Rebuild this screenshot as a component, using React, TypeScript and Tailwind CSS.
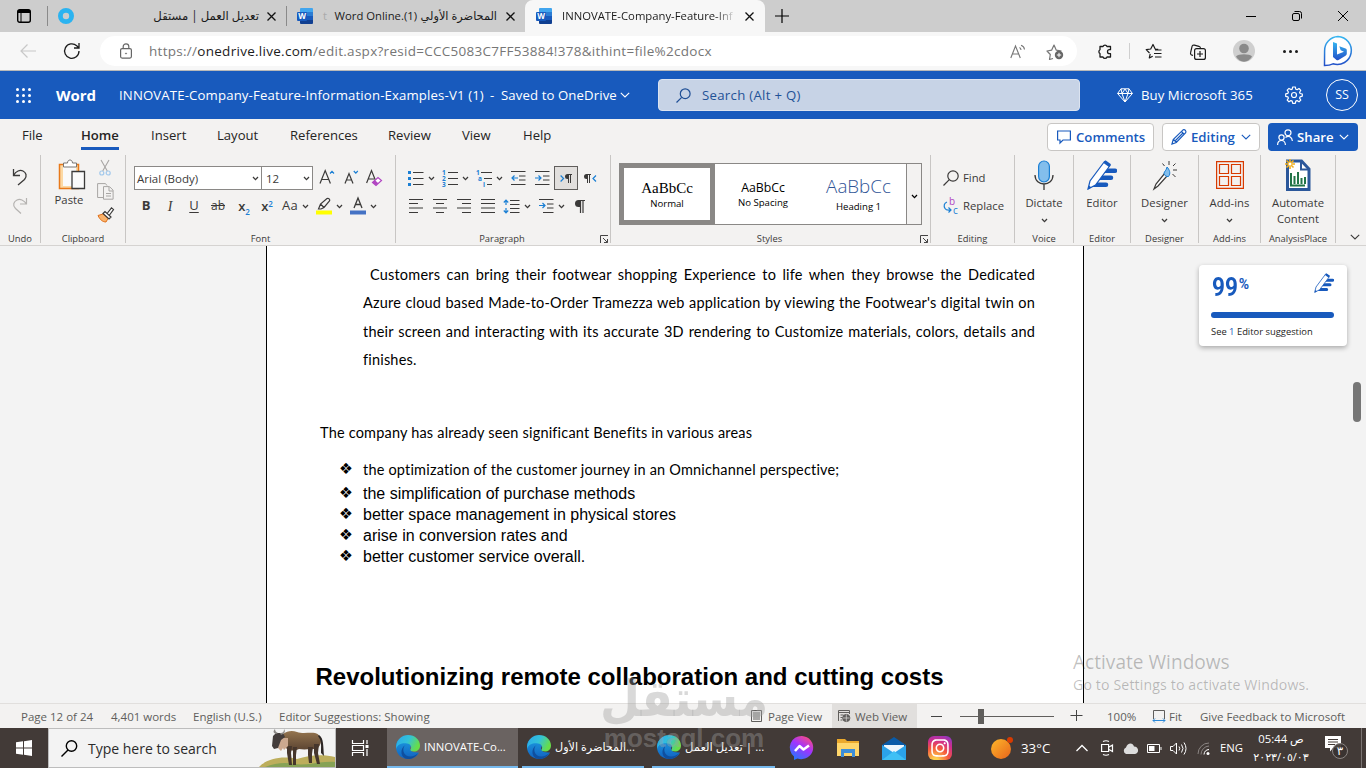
import type { ReactNode } from 'react';
import { FaInstagram } from 'react-icons/fa';

type SvgProps = {
  w: number;
  h: number;
  className?: string;
  children: ReactNode;
};

function Svg({ w, h, className = '', children }: SvgProps) {
  return (
    <svg
      width={w}
      height={h}
      viewBox={`0 0 ${w} ${h}`}
      fill="none"
      stroke="currentColor"
      className={`shrink-0 overflow-visible ${className}`}
    >
      {children}
    </svg>
  );
}

function Chevron({ className = '' }: { className?: string }) {
  return (
    <Svg w={7} h={5} className={className}>
      <path d="M1 1l2.5 2.6L6 1" strokeWidth="1.3" />
    </Svg>
  );
}

function WideChevron({ className = '' }: { className?: string }) {
  return (
    <Svg w={10} h={6} className={className}>
      <path d="M.8.8L5 5 9.200.8" strokeWidth="1.1" />
    </Svg>
  );
}

function WordIcon() {
  return (
    <Svg w={16} h={16}>
      <g stroke="none">
        <path d="M4 0h11a1 1 0 011 1v3H3V1a1 1 0 011-1z" fill="#41a5ee" />
        <path d="M3 4h13v4H3z" fill="#2b7cd3" />
        <path d="M3 8h13v4H3z" fill="#185abd" />
        <path d="M3 12h13v3a1 1 0 01-1 1H4a1 1 0 01-1-1z" fill="#103f91" />
        <rect y="4" width="10" height="9" rx="1" fill="#185abd" />
        <text x="5" y="11.300" textAnchor="middle" fontSize="8" fontWeight="700" fontFamily="Open Sans" fill="#fff">
          W
        </text>
      </g>
    </Svg>
  );
}

function CloseX() {
  return (
    <svg width="9" height="9" viewBox="0 0 9 9" stroke="#111" strokeWidth="1.3" className="shrink-0">
      <path d="M.5.5l8 8M8.500.5l-8 8" />
    </svg>
  );
}

function TabStrip() {
  return (
    <div className="flex h-8 items-center bg-[#cdcdcd] text-[11.300px] text-[#1b1b1b]">
      <div className="flex w-[47px] justify-center">
        <Svg w={14} h={14} className="text-black">
          <rect x=".7" y=".7" width="12.600" height="12.600" rx="2" strokeWidth="1.400" />
          <path d="M1 2.500h12" strokeWidth="3" />
          <path d="M4 3v10" strokeWidth="1" />
        </Svg>
      </div>
      <div className="h-5 w-px bg-[#8a8a8a]" />
      <div className="flex h-full w-[238px] items-center pl-[10px]">
        <Svg w={16} h={16}>
          <circle cx="8" cy="8" r="5.600" stroke="#2bb3f0" strokeWidth="4.800" />
        </Svg>
        <span dir="rtl" className="ml-2 w-[177px] text-[11.700px] whitespace-nowrap">
          تعديل العمل | مستقل
        </span>
        <div className="ml-2">
          <CloseX />
        </div>
      </div>
      <div className="h-5 w-px bg-[#8a8a8a]" />
      <div className="flex h-full w-[238px] items-center pl-[10px]">
        <WordIcon />
        <div className="ml-[10px] flex w-[174px] items-center justify-between whitespace-nowrap">
          <span className="text-[#aaa]">t</span>
          <span className="-mr-1">Word Online.(1)</span>
          <span dir="rtl" className="text-[11.300px]">المحاضرة الأولي</span>
        </div>
        <div className="ml-[9px]">
          <CloseX />
        </div>
      </div>
      <div className="flex h-full w-[240px] items-center rounded-t-lg bg-[#f7f7f7] pl-[11px]">
        <WordIcon />
        <div className="ml-[10px] w-[174px] overflow-hidden bg-gradient-to-r from-[#1b1b1b] from-88% to-transparent bg-clip-text whitespace-nowrap text-transparent">
          INNOVATE-Company-Feature-Inf
        </div>
        <div className="ml-[9px]">
          <CloseX />
        </div>
      </div>
      <Svg w={14} h={14} className="ml-[10px] text-black">
        <path d="M7 0v14M0 7h14" strokeWidth="1.200" />
      </Svg>
      <div className="ml-auto flex items-center gap-9 pr-[18px] text-black">
        <Svg w={10} h={10}>
          <path d="M0 5.500h10" />
        </Svg>
        <Svg w={10} h={10}>
          <rect x=".5" y="2.500" width="7" height="7" rx="1.500" />
          <path d="M2.500.5h5a2 2 0 012 2v5" />
        </Svg>
        <Svg w={10} h={10}>
          <path d="M0 0l10 10M10 0L0 10" />
        </Svg>
      </div>
    </div>
  );
}

function AddressBar() {
  return (
    <div className="flex h-[39px] items-center border-b border-[#b9b9b9] bg-[#f7f7f7]">
      <Svg w={16} h={14} className="ml-5 text-[#c8c8c8]">
        <path d="M16 7H1M7.500.5L1 7l6.500 6.500" strokeWidth="1.200" />
      </Svg>
      <Svg w={18} h={18} className="ml-[27px] text-[#1b1b1b]">
        <path d="M16 9a7.200 7.200 0 11-2.300-5.200L16 6M16 1v5h-5" strokeWidth="1.300" />
      </Svg>
      <div className="ml-[19px] flex h-[30px] w-[977px] items-center rounded-full bg-white">
        <Svg w={12} h={16} className="ml-5 text-[#666]">
          <rect x=".6" y="5.600" width="10.800" height="9.500" rx="1.500" strokeWidth="1.200" />
          <path d="M3.200 5.500V3.600a2.800 2.800 0 015.600 0v1.900" strokeWidth="1.200" />
          <circle cx="6" cy="10.500" r=".6" fill="currentColor" strokeWidth=".6" />
        </Svg>
        <div className="ml-[17px] pt-px text-[13.500px] tracking-[0.280px] whitespace-nowrap text-[#767676]">
          https://<span className="text-[#1b1b1b]">onedrive.live.com</span>
          /edit.aspx?resid=CCC5083C7FF53884!378&amp;ithint=file%2cdocx
        </div>
        <Svg w={16} h={15} className="mr-5 ml-auto text-[#767676]">
          <path d="M.8 14L5.500 2l4.800 12M2.500 10h6M9.500 3.500a3 3 0 011.500 2.500M11 1.200A5 5 0 0114.500 5.500" strokeWidth="1.100" />
        </Svg>
        <Svg w={18} h={17} className="mr-[13px] text-[#767676]">
          <path d="M7 15.500l-3.500 1 .8-5L1 8l4.600-.8L8 2l2.300 5.200L15.500 8" strokeWidth="1.200" strokeLinejoin="round" />
          <circle cx="13" cy="12" r="4.200" fill="#666" stroke="none" />
          <path d="M13 9.800v4.400M10.800 12h4.400" stroke="#fff" />
        </Svg>
      </div>
      <div className="flex flex-1 items-center text-[#1b1b1b]">
        <Svg w={17} h={17} className="ml-5">
          <path d="M3 3.500h3a2.100 2.100 0 014 0h3.500v3.200h-1a2 2 0 000 4h1v3.300H10a2.100 2.100 0 01-4 0H3v-3.500a2.100 2.100 0 010-3.700z" strokeWidth="1.300" strokeLinejoin="round" />
        </Svg>
        <div className="ml-[15px] h-4 w-px bg-[#cfcfcf]" />
        <Svg w={17} h={16} className="ml-[15px]">
          <path d="M5.200 10.800l-.9 4.200 3.400-1.800M4.500 10L1.200 6.700l4.500-.7L8 1.500 10.200 6l3 .4M10 7h6.500M9 10.500h7.500M10 14h6.500" strokeWidth="1.200" strokeLinejoin="round" />
        </Svg>
        <Svg w={17} h={17} className="ml-[27px]">
          <path d="M4 12.500l-1-.3a2 2 0 01-1.400-2.500L3 3.600a2 2 0 012.400-1.500l4.500 1.200c1 .3 1.600 1.100 1.500 2" strokeWidth="1.200" />
          <rect x="5.600" y="5.600" width="10.800" height="10.800" rx="2" strokeWidth="1.200" />
          <path d="M11 8v6M8 11h6" strokeWidth="1.200" />
        </Svg>
        <Svg w={22} h={22} className="ml-[27px]">
          <g stroke="none">
            <circle cx="11" cy="11" r="11" fill="#cfcfcf" />
            <circle cx="11" cy="8.500" r="4.800" fill="#8a8a8a" />
            <path d="M3 16.500c2-3 14-3 16 0-1.500 2.800-4.500 5.200-8 5.200s-6.500-2.400-8-5.200z" fill="#8a8a8a" />
          </g>
        </Svg>
        <div className="ml-7 flex gap-[3px]">
          <div className="h-[3px] w-[3px] rounded-full bg-[#1b1b1b]" />
          <div className="h-[3px] w-[3px] rounded-full bg-[#1b1b1b]" />
          <div className="h-[3px] w-[3px] rounded-full bg-[#1b1b1b]" />
        </div>
        <Svg w={32} h={32} className="ml-6">
          <defs>
            <linearGradient id="bing" x1="0" y1="0" x2="0" y2="1">
              <stop offset="0" stopColor="#35b5f0" />
              <stop offset="1" stopColor="#2350c8" />
            </linearGradient>
          </defs>
          <path d="M16 1.500a14 14 0 11-5 27.300c-3 1.500-6 1.700-8.500 1.700L2.600 16A14 14 0 0116 1.500z" fill="#fff" stroke="url(#bing)" strokeWidth="1.500" />
          <path d="M11 7l4 1.500v11l7-2.700-3.300-1.600-1.400-4 6.200 2.300c1 .4 1.300 1 1.300 2v3c0 1-.5 1.700-1.300 2.200l-7 4.200c-.8.500-1.300.5-2 0L11 22z" fill="url(#bing)" stroke="none" />
        </Svg>
      </div>
    </div>
  );
}

function WordHeader() {
  return (
    <div className="flex h-12 items-center bg-[#185abd] text-[13.200px] whitespace-nowrap text-white">
      <div className="ml-4 grid w-[15px] grid-cols-3 gap-[3px]">
        {Array.from({ length: 9 }, (_, i) => (
          <div key={i} className="h-[3px] w-[3px] rounded-full bg-white" />
        ))}
      </div>
      <div className="ml-[25px] w-[63px] text-[15px] font-bold">Word</div>
      <div className="w-[371px] pt-px tracking-[0.140px]">INNOVATE-Company-Feature-Information-Examples-V1 (1)</div>
      <div className="w-[11px] pt-px">-</div>
      <div className="w-[119px] pt-px tracking-[0.100px]">Saved to OneDrive</div>
      <WideChevron />
      <div className="ml-[28px] flex h-8 w-[422px] items-center rounded-sm border border-[#dbe3f0] bg-[#c7d3e6] text-[#1f5297]">
        <Svg w={15} h={15} className="ml-[17px] text-[#1f4f96]">
          <circle cx="9.200" cy="5.700" r="4.900" strokeWidth="1.200" />
          <path d="M5.700 9.300L.5 14.500" strokeWidth="1.200" />
        </Svg>
        <span className="ml-[11px] pt-px tracking-[0.300px]">Search (Alt + Q)</span>
      </div>
      <Svg w={16} h={15} className="ml-[37px]">
        <path d="M4 .8h8l3.400 4.700L8 14 .6 5.500zM.6 5.500h14.800M4 .8l1 4.700L8 14l3-8.500 1-4.700M5 5.500L8 1l3 4.500" />
      </Svg>
      <span className="ml-2 w-[112px] pt-px tracking-[0.050px]">Buy Microsoft 365</span>
      <Svg w={18} h={18} className="ml-8">
        <circle cx="9" cy="9" r="2.500" strokeWidth="1.200" />
        <path
          d="M7.700 1h2.600l.5 2.200 1.300.5 1.900-1.200 1.800 1.800-1.200 1.900.5 1.300 2.200.5v2.200l-2.200.6-.5 1.300 1.200 1.900-1.800 1.800-1.900-1.200-1.300.5-.5 2.200H7.700l-.5-2.200-1.300-.5L4 15.800 2.200 14l1.200-1.900-.5-1.300L.7 10.300V7.900l2.200-.6.5-1.300-1.200-1.900L4 2.400l1.900 1.200 1.300-.5z"
          strokeWidth="1.200"
          strokeLinejoin="round"
        />
      </Svg>
      <div className="ml-[23px] flex h-8 w-8 items-center justify-center rounded-full border border-white pt-px text-[12.500px]">SS</div>
    </div>
  );
}

const tabs = [
  { label: 'File', cls: 'w-[59px]' },
  { label: 'Home', cls: 'w-[70px]' },
  { label: 'Insert', cls: 'w-[66px]' },
  { label: 'Layout', cls: 'w-[73px]' },
  { label: 'References', cls: 'w-[98px]' },
  { label: 'Review', cls: 'w-[74px]' },
  { label: 'View', cls: 'w-[61px]' },
  { label: 'Help', cls: 'w-[60px]' },
];

function RibbonTabs() {
  return (
    <div className="flex h-9 items-start pl-[22px] text-[13.100px] text-[#252423]">
      {tabs.map((tab) => (
        <div key={tab.label} className={tab.cls}>
          {tab.label === 'Home' ? (
            <span className="inline-block h-[31px] border-b-3 border-[#185abd] leading-8 font-semibold">
              {tab.label}
            </span>
          ) : (
            <span className="leading-8">{tab.label}</span>
          )}
        </div>
      ))}
      <div className="mt-1 mr-2 ml-auto flex gap-2 font-semibold text-[#185abd]">
        <div className="flex h-7 w-[107px] items-center rounded-sm border border-[#c8c6c4] bg-white pl-[9px]">
          <Svg w={14} h={14}>
            <path d="M.6 1h12.800v9H6l-3 3v-3H.6z" strokeWidth="1.200" />
          </Svg>
          <span className="ml-[5px] pt-px text-[13.200px]">Comments</span>
        </div>
        <div className="flex h-7 w-[98px] items-center rounded-sm border border-[#c8c6c4] bg-white pl-2">
          <Svg w={16} h={16}>
            <path d="M1 15l1.200-4.500L12 .9c2-.7 3.500 1 2.700 2.800L5.300 13.500zM10.500 2.500l2.800 2.800M2.500 10.500l3 3M12 4l-7.500 7.500" strokeWidth="1.200" />
          </Svg>
          <span className="ml-[4px] w-[45px] pt-px text-[13.200px]">Editing</span>
          <WideChevron className="ml-[5px]" />
        </div>
        <div className="flex h-7 w-[90px] items-center rounded-sm bg-[#185abd] pl-[9px] text-white">
          <Svg w={16} h={16}>
            <circle cx="4.500" cy="8.500" r="2.600" strokeWidth="1.200" />
            <circle cx="11" cy="3.800" r="3" strokeWidth="1.200" />
            <path d="M.6 16c0-6 7.800-6 7.800 0M8.500 8.500c3-2.500 6.500-.5 6.900 3.500" strokeWidth="1.200" />
          </Svg>
          <span className="ml-[4px] w-9 pt-px text-[13.200px]">Share</span>
          <WideChevron className="ml-[6px]" />
        </div>
      </div>
    </div>
  );
}

type GroupProps = {
  label: string;
  className: string;
  launcher?: boolean;
  children: ReactNode;
};

function Group({ label, className, launcher, children }: GroupProps) {
  return (
    <>
      <div className={`flex h-[90px] shrink-0 flex-col ${className}`}>
        {children}
        <div className="mt-auto flex h-3 items-center">
          <div className="flex-1 text-center text-[9.400px] whitespace-nowrap">{label}</div>
          {launcher && (
            <Svg w={8} h={8} className="-ml-2 mr-[2px] mb-px text-[#444]">
              <path d="M.5 8V.5H8M3 3l4.500 4.500M7.500 4v3.500H4" />
            </Svg>
          )}
        </div>
      </div>
      <div className="h-[88px] w-px shrink-0 bg-[#c8c6c4]" />
    </>
  );
}

function Lines({ d }: { d: string }) {
  return (
    <div className="flex w-6 justify-center">
      <Svg w={15} h={14}>
        <path d={d} strokeWidth="1.100" />
      </Svg>
    </div>
  );
}

function ClipboardGroup() {
  return (
    <Group label="Clipboard" className="w-[84px]">
      <div className="flex pl-[11px]">
        <div className="flex w-[34px] flex-col items-center pt-1">
          <Svg w={28} h={31} className="ml-[5px]">
            <path d="M1.500 5.500h19v24h-19z" fill="#fcd9a4" stroke="#e8791a" strokeWidth="1.500" />
            <path d="M5 8h13v19H5z" fill="#fafafa" stroke="none" />
            <path d="M5.500 8V4h4c0-4 5-4 5 0h4v4z" fill="#fff" stroke="#797775" />
            <path d="M14 12.500h12.500v17H14z" fill="#fafafa" stroke="#3b3a39" strokeWidth="1.300" />
          </Svg>
          <span className="mt-[2px] text-[11.300px] leading-[16px]">Paste</span>
        </div>
        <div className="ml-[9px] flex w-5 flex-col items-center gap-[7px] pt-[5px]">
          <Svg w={12} h={16} className="text-[#a8a6a4]">
            <path d="M2 0l6.300 11M10 0L3.700 11" strokeWidth="1.100" />
            <circle cx="2.800" cy="13" r="2" stroke="#a3c9ec" strokeWidth="1.200" />
            <circle cx="9.200" cy="13" r="2" stroke="#a3c9ec" strokeWidth="1.200" />
          </Svg>
          <Svg w={17} h={17} className="text-[#a8a6a4]">
            <path d="M6 14.500H.6V.6h7.900l1.500 2M6.500 3.600h6l3.600 3.600v9H6.500zM12 4v4h4M9 10.500h5M9 13h5" />
          </Svg>
          <Svg w={17} h={16}>
            <path d="M1 8.500l5-1.500 5 4.500-2 3.500c-3 0-6-2-8-6.500z" fill="#f9b26b" stroke="#e0701a" />
            <path d="M6 6.500l2-2 6 5.500-2 2zM10.500 6L14.500.8l2 1.700-4 5.500" fill="#fff" stroke="#3b3a39" strokeWidth="1.200" />
          </Svg>
        </div>
      </div>
    </Group>
  );
}

function FontGroup() {
  return (
    <Group label="Font" className="w-[269px]">
      <div className="flex flex-col pt-[11px] pl-2">
        <div className="flex items-center">
          <div className="flex h-6 w-[128px] items-center justify-between border border-[#8a8886] bg-white pr-[2px] pl-[2px] text-[11.500px]">
            <span className="pt-px">Arial (Body)</span>
            <Chevron />
          </div>
          <div className="-ml-px flex h-6 w-[52px] items-center justify-between border border-[#8a8886] bg-white pr-[2px] pl-1 text-[11.500px]">
            <span className="pt-px">12</span>
            <Chevron />
          </div>
          <Svg w={16} h={16} className="ml-[6px]">
            <path d="M1 13.500L6.200.6l5.200 12.900M2.800 9.500h6.800" strokeWidth="1.200" />
            <path d="M11 3.500l2-2.200 2 2.200" stroke="#1a7fd4" strokeWidth="1.200" />
          </Svg>
          <Svg w={16} h={16} className="ml-[9px]">
            <path d="M1 13.500L5 3.500l4 10M2.500 10h5" strokeWidth="1.200" />
            <path d="M9.800 1l2 2.200 2-2.200" stroke="#1a7fd4" strokeWidth="1.200" />
          </Svg>
          <Svg w={17} h={16} className="ml-[6px]">
            <path d="M.6 13L5.500.6l4 9.900M2 9h6" strokeWidth="1.200" />
            <path d="M6.500 12.500l5.500-5 3.500 3-5.500 5z" fill="#fff" stroke="#b146c2" strokeWidth="1.200" />
            <path d="M6.500 12.500l2.500-2.200 3.300 3-2.300 2.200z" fill="#b146c2" stroke="none" />
          </Svg>
        </div>
        <div className="mt-1 flex h-6 items-center text-[13px] text-[#3b3a39]">
          <span className="w-6 text-center font-bold">B</span>
          <span className="w-6 text-center font-['Liberation_Serif'] text-[14px] italic">I</span>
          <span className="w-6 text-center underline underline-offset-2">U</span>
          <span className="w-6 text-center text-[12px] line-through">ab</span>
          <span className="w-6 pl-1 text-center leading-4 font-semibold">
            x<sub className="-bottom-1 text-[8px] text-[#1a7fd4]">2</sub>
          </span>
          <span className="w-6 pl-[2px] text-center leading-4 font-semibold">
            x<sup className="text-[8px] text-[#1a7fd4]">2</sup>
          </span>
          <span className="w-[22px] pl-1 tracking-wide">Aa</span>
          <Chevron className="ml-[2px]" />
          <Svg w={16} h={18} className="ml-[7px]">
            <path d="M2.500 12l2-5 6.500-5.500c1.500-.8 3.500 1 2.500 2.500L8 10.500 5 12zM4.500 7L8 10.500" strokeWidth="1.200" />
            <path d="M0 13.500h16v4H0z" fill="#ffff00" stroke="none" />
          </Svg>
          <Chevron className="ml-[4px]" />
          <Svg w={16} h={18} className="ml-[7px]">
            <path d="M4 11L8 1l4 10M5.500 7.500h5" strokeWidth="1.300" />
            <path d="M0 13.500h16v4H0z" fill="#4472c4" stroke="none" />
          </Svg>
          <Chevron className="ml-1" />
        </div>
      </div>
    </Group>
  );
}

function ParagraphGroup() {
  return (
    <Group label="Paragraph" className="w-[214px]" launcher>
      <div className="pt-[11px] pl-3">
        <div className="flex h-6 items-center">
          <Svg w={16} h={16}>
            <path d="M5 2.500h10.500M5 8.500h10.500M5 14.500h10.500" />
            <path d="M0 1h3v3H0zM0 7h3v3H0zM0 13h3v3H0z" fill="#1a7fd4" stroke="none" />
          </Svg>
          <Chevron className="ml-1" />
          <Svg w={16} h={17} className="ml-[7px]">
            <path d="M6 2.500h10M6 8.500h10M6 14.500h10" />
            <g fill="#1a7fd4" stroke="none" fontSize="6.500" fontWeight="700" fontFamily="Open Sans">
              <text x="0" y="5">1</text>
              <text x="0" y="11">2</text>
              <text x="0" y="17">3</text>
            </g>
          </Svg>
          <Chevron className="ml-1" />
          <Svg w={16} h={17} className="ml-[7px]">
            <path d="M5 2.500h11M8 8.500h8M11 14.500h5" />
            <g fill="#1a7fd4" stroke="none" fontSize="6.500" fontWeight="700" fontFamily="Open Sans">
              <text x="0" y="5">1</text>
              <text x="2" y="11">a</text>
              <text x="7" y="17">i</text>
            </g>
          </Svg>
          <Chevron className="ml-1" />
          <Svg w={15} h={14} className="ml-2">
            <path d="M0 .5h14.500M8 5h6.500M8 9h6.500M0 13.500h14.500" />
            <path d="M7 7H1M3.500 4.500L1 7l2.500 2.500" stroke="#1a7fd4" strokeWidth="1.200" />
          </Svg>
          <Svg w={15} h={14} className="ml-[9px]">
            <path d="M0 .5h14.500M8 5h6.500M8 9h6.500M0 13.500h14.500" />
            <path d="M0 7h6M3.500 4.500L6 7 3.500 9.500" stroke="#1a7fd4" strokeWidth="1.200" />
          </Svg>
          <div className="ml-1 flex h-6 w-6 shrink-0 items-center justify-center border border-[#605e5c] bg-[#e1dfdd]">
            <Svg w={12} h={9}>
              <path d="M.6 1.500l3 3-3 3" stroke="#1a7fd4" strokeWidth="1.200" />
              <path d="M8.500 0v9M10.500 0v9M12 .5H8" />
              <path d="M9 0H7.500a2.500 2.500 0 000 5H9z" fill="currentColor" stroke="none" />
            </Svg>
          </div>
          <Svg w={13} h={9} className="ml-[6px]">
            <path d="M12 1.500l-3 3 3 3" stroke="#1a7fd4" strokeWidth="1.200" />
            <path d="M3.500 0v9M5.500 0v9M7 .5H3" />
            <path d="M4 0H2.500a2.500 2.500 0 000 5H4z" fill="currentColor" stroke="none" />
          </Svg>
        </div>
        <div className="-ml-1 mt-1 flex h-6 items-center">
          <Lines d="M0 .5h14M0 4.500h9M0 9h14M0 13.500h9" />
          <Lines d="M0 .5h14M3 4.500h8M0 9h14M3 13.500h8" />
          <Lines d="M0 .5h14M5 4.500h9M0 9h14M5 13.500h9" />
          <Lines d="M0 .5h14M0 4.500h14M0 9h14M0 13.500h14" />
          <Svg w={17} h={15} className="ml-[3px]">
            <path d="M7 1.500h9.500M7 5.500h9.500M7 9.500h9.500M7 13.500h9.500" />
            <path d="M3 6V1.500M.8 3.500L3 1.200l2.200 2.300M3 9v4.500M.8 11.500L3 13.800l2.200-2.300" stroke="#1a7fd4" strokeWidth="1.200" />
          </Svg>
          <Chevron className="ml-1" />
          <Svg w={16} h={14} className="ml-[7px]">
            <path d="M1 .5h14.500M9 5h6.500M9 9h6.500M5 13.500h10.500" />
            <path d="M1 6.500h6M4.500 4L7 6.500 4.500 9" stroke="#1a7fd4" strokeWidth="1.200" />
          </Svg>
          <Chevron className="ml-1" />
          <Svg w={10} h={13} className="ml-[10px]">
            <path d="M5.500 0v13M8 0v13M10 .5H5" strokeWidth="1.200" />
            <path d="M6 0H3.500a3.500 3.500 0 000 7H6z" fill="currentColor" stroke="none" />
          </Svg>
        </div>
      </div>
    </Group>
  );
}

function StylesGroup() {
  return (
    <Group label="Styles" className="w-[319px]" launcher>
      <div className="mt-2 ml-2 flex h-[62px] w-[303px] border border-[#8a8886] bg-white text-black">
        <div className="-my-px -ml-px flex w-[96px] flex-col items-center justify-center border-5 border-[#8a8886] pt-[3px]">
          <span className="font-['Liberation_Serif'] text-[15px] leading-4">AaBbCc</span>
          <span className="text-[9.600px] leading-4">Normal</span>
        </div>
        <div className="flex w-[96px] flex-col items-center justify-center">
          <span className="mt-[3px] text-[12.300px] leading-[15px]">AaBbCc</span>
          <span className="text-[9.600px] leading-4">No Spacing</span>
        </div>
        <div className="flex w-[95px] flex-col items-center justify-center pt-1">
          <span className="text-[18.800px] leading-[22px] font-light text-[#2f5496]">AaBbCc</span>
          <span className="text-[9.600px] leading-[20px]">Heading 1</span>
        </div>
        <div className="flex flex-1 items-center justify-center border-l border-[#8a8886] bg-[#f3f2f1]">
          <Chevron className="mt-1" />
        </div>
      </div>
    </Group>
  );
}

function EditingGroup() {
  return (
    <Group label="Editing" className="w-[83px]">
      <div className="flex flex-col pt-[9px] pl-3 text-[11.300px]">
        <div className="flex h-7 items-center gap-1">
          <Svg w={16} h={16}>
            <circle cx="10" cy="6" r="5.200" strokeWidth="1.200" />
            <path d="M6.300 9.700L.5 15.500" strokeWidth="1.200" />
          </Svg>
          <span className="pt-px">Find</span>
        </div>
        <div className="flex h-7 items-center gap-1">
          <Svg w={16} h={18}>
            <path d="M4 5C1 6 .5 9 2 11.500s4 1.500 6 1.500M5.500 10.500L8 13l-2.500 2.500" stroke="#1a7fd4" strokeWidth="1.200" />
            <g stroke="none" fontSize="10" fontFamily="Open Sans">
              <text x="6" y="8" fill="#b146c2">b</text>
              <text x="10" y="16.500" fill="#1a7fd4">c</text>
            </g>
          </Svg>
          <span className="pt-px">Replace</span>
        </div>
      </div>
    </Group>
  );
}

function EditorPen({ size }: { size: number }) {
  return (
    <svg width={size} height={size} viewBox="0 0 30 30" className="shrink-0">
      <path d="M18.500 8.500h9.500a2 2 0 010 4.500H15zM14 15.500h10a2 2 0 010 4.500H10.500zM9.500 22.500h9.500a2 2 0 010 4.500H5z" fill="#185abd" />
      <path d="M1 29l2-8L17.500 1.500l5.500 4L8.500 25z" fill="#fff" stroke="#185abd" strokeWidth="1.200" />
      <path d="M16.500 3l2-2.800 5.500 4-2 2.800zM1 29.500l1-4 2.500 2z" fill="#185abd" />
    </svg>
  );
}

type BigButtonProps = {
  icon: ReactNode;
  text: string;
  arrow?: boolean;
};

function BigButton({ icon, text, arrow }: BigButtonProps) {
  return (
    <div className="flex flex-col items-center pt-1 text-[11.300px] leading-4">
      <div className="flex h-8 items-center">{icon}</div>
      <span className="mt-1 whitespace-pre text-center">{text}</span>
      {arrow && <Chevron className="mt-[7px]" />}
    </div>
  );
}

function Ribbon() {
  return (
    <div className="flex h-[90px] text-[#3b3a39]">
      <Group label="Undo" className="w-10">
        <Svg w={16} h={18} className="mt-[13px] ml-3">
          <path d="M1.500 1v6.500H8M1.500 7.500C4 3 8 1.500 11 3s4.500 5 1.500 8.500L6 17" strokeWidth="1.300" />
        </Svg>
        <Svg w={16} h={18} className="mt-[11px] ml-3 text-[#b5b3b1]">
          <path d="M14.500 1v6H8M14.500 7C12 3 8 1.500 5 3s-5 5-1.500 8.500L9 16.500" strokeWidth="1.200" />
        </Svg>
      </Group>
      <ClipboardGroup />
      <FontGroup />
      <ParagraphGroup />
      <StylesGroup />
      <EditingGroup />
      <Group label="Voice" className="w-[58px]">
        <BigButton
          text="Dictate"
          arrow
          icon={
            <Svg w={20} h={31}>
              <path d="M1 15c0 12 18 12 18 0M10 24v6" strokeWidth="1.300" />
              <rect x="4.600" y="1" width="10.800" height="21" rx="5.400" fill="#83beec" stroke="#1a7fd4" strokeWidth="1.200" />
            </Svg>
          }
        />
      </Group>
      <Group label="Editor" className="w-[56px]">
        <BigButton text="Editor" icon={<EditorPen size={30} />} />
      </Group>
      <Group label="Designer" className="w-[67px]">
        <BigButton
          text="Designer"
          arrow
          icon={
            <Svg w={24} h={29}>
              <path d="M1 28l2-5 9-11 2.500 2.500L5 25z" fill="#fff" strokeWidth="1.200" />
              <path d="M11 12.500c0-2 2.500-3 3-6.500 2.500 2.500 4 6.500 1.500 9.500-2 .5-4-1-4.500-3z" fill="#83beec" stroke="#1a7fd4" />
              <path d="M16 0v4M9.500 2.500l2 2.500M22.500 2.500L20 5M20 9h4M19.500 13l3 3" />
            </Svg>
          }
        />
      </Group>
      <Group label="Add-ins" className="w-[61px]">
        <BigButton
          text="Add-ins"
          arrow
          icon={
            <Svg w={28} h={28} className="text-[#d83b01]">
              <path d="M.6.6h26.800v26.800H.6zM3.500 3.500h9v9h-9zM15.500 3.500h9v9h-9zM3.500 15.500h9v9h-9zM15.500 15.500h9v9h-9z" strokeWidth="1.200" />
            </Svg>
          }
        />
      </Group>
      <Group label="AnalysisPlace" className="w-[74px]">
        <BigButton
          text={'Automate\nContent'}
          icon={
            <Svg w={26} h={32}>
              <path d="M2.500 2h14l7.500 8v20.500H2.500z" fill="#fff" stroke="#2b579a" strokeWidth="3" />
              <path d="M16 2v8.500h8" stroke="#2b579a" strokeWidth="2" />
              <path d="M6 14v12.500h14M9.500 25v-8M13 25V13M16.500 25v-6M20 25v-7" stroke="#217346" strokeWidth="2" />
              <path d="M5 0v10M0 5h10M1.500 1.500l7 7M8.500 1.500l-7 7" stroke="#f2b01e" strokeWidth="1.600" />
              <circle cx="5" cy="5" r="1.500" fill="#fff" stroke="none" />
            </Svg>
          }
        />
      </Group>
      <WideChevron className="mt-auto mr-[6px] mb-[5px] ml-auto" />
    </div>
  );
}

const benefits = [
  'the simplification of purchase methods',
  'better space management in physical stores',
  'arise in conversion rates and',
  'better customer service overall.',
];

function DocumentArea() {
  return (
    <div className="flex h-[458px] border-t border-[#d5d3d1] bg-[#f3f3f3]">
      <div className="ml-[266px] h-full w-[818px] overflow-hidden border-x border-black bg-white text-black">
        <div className="mt-[15px] ml-24 w-[672px] font-['Lato'] text-[14.500px] leading-[28.330px] tracking-[0.190px] whitespace-nowrap [font-variant-ligatures:none]">
          <div className="pl-[7px] [text-align-last:justify]">
            Customers can bring their footwear shopping Experience to life when they browse the Dedicated
          </div>
          <div className="[text-align-last:justify]">
            Azure cloud based Made-to-Order Tramezza web application by viewing the Footwear's digital twin on
          </div>
          <div className="[text-align-last:justify]">
            their screen and interacting with its accurate 3D rendering to Customize materials, colors, details and
          </div>
          <div>finishes.</div>
        </div>
        <p className="mt-[45px] ml-[53px] font-['Lato'] text-[14.500px] leading-7 tracking-[0.190px] [font-variant-ligatures:none]">
          The company has already seen significant Benefits in various areas
        </p>
        <ul className="mt-[11px] ml-[72px]">
          <li className="mb-[2px] flex h-[23px] items-center font-['Lato'] text-[14.500px] tracking-[0.190px] [font-variant-ligatures:none]">
            <span className="w-6 font-['DejaVu_Sans'] text-[15.500px] tracking-normal">❖</span>
            the optimization of the customer journey in an Omnichannel perspective;
          </li>
          {benefits.map((item) => (
            <li key={item} className="flex h-[21px] items-center font-['Liberation_Sans'] text-[16px]">
              <span className="w-6 font-['DejaVu_Sans'] text-[15.500px]">❖</span>
              {item}
            </li>
          ))}
        </ul>
        <h1 className="mt-[94px] ml-[48.500px] font-['Liberation_Sans'] text-[24px] leading-8 font-bold whitespace-nowrap">
          Revolutionizing remote collaboration and cutting costs
        </h1>
      </div>
      <div className="mt-[19px] ml-[115px] h-[81px] w-[148px] rounded bg-white px-3 pt-[7px] shadow-[0_2px_5px_rgba(0,0,0,0.3)]">
        <div className="flex h-8 justify-between text-[#185abd]">
          <div className="flex pl-px font-['Roboto'] text-[25px] leading-[31px] font-bold">
            <span className="origin-left scale-x-[0.9]">99</span>
            <span className="-ml-[2px] text-[14px] leading-6">%</span>
          </div>
          <div className="pt-px pr-px">
            <EditorPen size={20} />
          </div>
        </div>
        <div className="mt-[8px] h-1.5 w-[123px] rounded-full bg-[#185abd]" />
        <div className="mt-[6px] text-[9.400px] leading-4 whitespace-nowrap text-[#252423]">
          See <span className="text-[#185abd]">1</span> Editor suggestion
        </div>
      </div>
      <div className="mt-[136px] ml-[6px] h-10 w-2 rounded-full bg-[#767676]" />
    </div>
  );
}

function StatusBar() {
  return (
    <div className="flex h-[25px] items-center border-t border-[#e1dfdd] bg-[#f3f2f1] text-[11.500px] whitespace-nowrap text-[#605e5c]">
      <span className="ml-[21px] w-[90px] pt-px">Page 12 of 24</span>
      <span className="w-[82px] pt-px">4,401 words</span>
      <span className="w-[86px] pt-px">English (U.S.)</span>
      <span className="w-[472px] pt-px">Editor Suggestions: Showing</span>
      <Svg w={11} h={12}>
        <path d="M.5.5h10v11H.5zM2 3h7M2 5h7M2 7h7M2 9h7" />
      </Svg>
      <span className="ml-[6px] w-[64px] pt-px">Page View</span>
      <div className="flex h-full w-[85px] items-center bg-[#e1dfdd] pl-[6px]">
        <Svg w={12} h={12}>
          <path d="M.5 11V.5h11V4M.5 2.500h11M2.500 5h3M2.500 7.500h2M2.500 10h2" />
          <circle cx="8.300" cy="8" r="3.600" fill="#605e5c" />
          <path d="M5 8h6.500M8.300 4.500v7" stroke="#e1dfdd" strokeWidth=".7" />
        </Svg>
        <span className="ml-[5px] pt-px">Web View</span>
      </div>
      <div className="ml-[14px] h-px w-[11px] bg-[#444]" />
      <div className="ml-[18px] flex w-[94px] items-center">
        <div className="h-px w-[18px] bg-[#605e5c]" />
        <div className="h-[15px] w-[6px] bg-[#605e5c]" />
        <div className="h-px flex-1 bg-[#605e5c]" />
      </div>
      <Svg w={12} h={12} className="ml-4 text-[#444]">
        <path d="M6.500 0v11M.5 5.500h12" />
      </Svg>
      <span className="ml-[25px] w-[45px] pt-px">100%</span>
      <Svg w={14} h={13}>
        <path d="M1.500 9V.5h11V9" />
        <path d="M1 10.500h12M3 8.500l-2 2 2 2M11 8.500l2 2-2 2" stroke="#2b88d8" />
      </Svg>
      <span className="ml-[3px] w-[31px] pt-px">Fit</span>
      <span className="pt-px">Give Feedback to Microsoft</span>
    </div>
  );
}

function EdgeIcon() {
  return (
    <Svg w={24} h={24}>
      <defs>
        <linearGradient id="edgeTop" x1="0" y1="0" x2="1" y2=".4">
          <stop offset="0" stopColor="#2aa7ee" />
          <stop offset=".55" stopColor="#33c2d8" />
          <stop offset="1" stopColor="#66dd4a" />
        </linearGradient>
        <linearGradient id="edgeBody" x1="0" y1="0" x2="0" y2="1">
          <stop offset="0" stopColor="#1b9de2" />
          <stop offset="1" stopColor="#1262c0" />
        </linearGradient>
      </defs>
      <g stroke="none">
        <path d="M0 12C0 5 5 1 12 3c4 1 5 5 3 8-2 3-1 7 8 6.500C21 21.500 17 24 12 24 5.500 24 0 19 0 12z" fill="url(#edgeBody)" />
        <path d="M.2 11C1 4.500 6 0 12 0c7 0 12 5 12 10.500 0 4-3 6-6 6-2.500 0-4-1-3.500-2 1.500-2 .5-5.500-3.500-6C6.500 7.800 1.500 9 .2 14z" fill="url(#edgeTop)" />
        <path d="M9.500 10c-4 3-2.500 11.500 5 11.500 3 0 5.500-1.500 7.500-3.500-2 4-6 6-10 6C4 23.500 3.500 13.500 9.500 10z" fill="#0f4f9f" />
      </g>
    </Svg>
  );
}

function Wildebeest() {
  return (
    <Svg w={76} h={38} className="ml-auto">
      <defs>
        <linearGradient id="hide" x1="0" y1="0" x2="0" y2="1">
          <stop offset="0" stopColor="#94744f" />
          <stop offset="1" stopColor="#5a4331" />
        </linearGradient>
      </defs>
      <g stroke="none">
        <path d="M0 38c6-7 22-12 38-8 12-4 26-5 38-2v10z" fill="#bdae5c" />
        <path d="M6 38c10-4 20-5 30-3s26-3 40-2v5z" fill="#86a255" />
        <path d="M24 5c4-3 9-4 14-2 6 2 13 0 18 1 4 1 6 4 6 8 0 3-2 6-4 8-7 0-13 1-18 0-5 2-9 2-12 0-4-4-6-10-4-15z" fill="url(#hide)" />
        <path d="M28 17h5l-1 7 1 12h-3l-2-12zM34 18h4l-1 8v10h-3v-9zM49 18h5l-1 7 0 9h-3l-1-8zM55 15h5l-1 9 2 11h-3l-3-11z" fill="#46362c" />
        <path d="M20 9l9 0 0 8-4 4-1-2-2 3-3-3z" fill="#cba88f" />
        <path d="M14 7l3-3h7l2 4-4 3-3 8-4 1-2-3z" fill="#433c3b" />
        <path d="M60 6c5 3 4 12 5 21l-3-3c0-7 1-12-3-17z" fill="#2d2725" />
        <path d="M17 5c-3-1-3-3-1-5 0 2 1 3 3 4zM21 4c3 0 4-1 4-4 2 3 0 5-3 6z" fill="#8a8784" />
      </g>
    </Svg>
  );
}

function Taskbar() {
  return (
    <div className="flex h-10 items-center bg-[#423a37] text-[11.300px] whitespace-nowrap text-white">
      <Svg w={16} h={16} className="mx-4">
        <path d="M0 2.300L7 1.300v6.200H0zM8 1.200L16 0v7.500H8zM0 8.500h7v6.200l-7-1zM8 8.500h8V16l-8-1.200z" fill="#fff" stroke="none" />
      </Svg>
      <div className="flex h-10 w-[288px] items-center border border-[#bdbdbd] bg-[#f3f3f3] pl-3 text-[#2b2b2b]">
        <Svg w={17} h={17} className="text-black">
          <circle cx="10.500" cy="6" r="5.200" strokeWidth="1.400" />
          <path d="M7 10L.5 16.500" strokeWidth="1.400" />
        </Svg>
        <span className="ml-[10px] pt-px text-[14px]">Type here to search</span>
        <Wildebeest />
      </div>
      <Svg w={17} h={16} className="ml-4">
        <path d="M.5 0v3.500h11V0M.5 16v-3.500h11V16M.5 5.500h11v5H.5zM15 0v4M15 9v7" strokeWidth="1.200" />
        <path d="M13.500 5h3v3h-3z" fill="#fff" stroke="none" />
      </Svg>
      <div className="ml-[18px] flex h-10 w-[131px] items-center border-b-2 border-[#76b9ed] bg-[#6a6361] pl-[9px]">
        <EdgeIcon />
        <span className="ml-1 pt-px">INNOVATE-Co...</span>
      </div>
      <div className="ml-1 flex h-10 w-[122px] items-center border-b-2 border-[#76b9ed] pl-[5px]">
        <EdgeIcon />
        <span className="ml-1 text-[11.200px]">المحاضرة الأول...</span>
      </div>
      <div className="ml-2 flex h-10 w-[123px] items-center border-b-2 border-[#76b9ed] pl-[5px]">
        <EdgeIcon />
        <span className="ml-1 text-[11.600px]">تعديل العمل | ...</span>
      </div>
      <Svg w={24} h={24} className="ml-[15px]">
        <defs>
          <linearGradient id="messenger" x1=".2" y1="1" x2=".8" y2="0">
            <stop offset="0" stopColor="#1f7bff" />
            <stop offset=".55" stopColor="#a033ff" />
            <stop offset="1" stopColor="#ff4c7e" />
          </linearGradient>
        </defs>
        <path d="M12 0a12 11.600 0 11-4.500 22.600L4 24v-3.500A11.600 11.600 0 0112 0z" fill="url(#messenger)" stroke="none" />
        <path d="M5 15l4.500-5 4 3.500L19 9.500" stroke="#fff" strokeWidth="2.600" strokeLinejoin="round" />
      </Svg>
      <Svg w={22} h={20} className="ml-[23px]">
        <g stroke="none">
          <path d="M0 1h8l2 2h12v15H0z" fill="#eba92c" />
          <path d="M0 5h22v13H0z" fill="#ffd66b" />
          <path d="M4 11h14v8h-3v-4H7v4H4z" fill="#3d8ed8" />
        </g>
      </Svg>
      <Svg w={24} h={23} className="ml-[23px]">
        <g stroke="none">
          <path d="M0 8l12-8 12 8v2H0z" fill="#0a5ba8" />
          <path d="M2 8h20v9H2z" fill="#eef6fc" />
          <path d="M0 8l12 8 12-8v15H0z" fill="#2ba3ea" />
          <path d="M0 23l12-9 12 9z" fill="#3fc0f5" />
        </g>
      </Svg>
      <div className="ml-[22px] flex h-6 w-6 items-center justify-center rounded-md bg-[radial-gradient(circle_at_30%_105%,#fdcf4d_10%,#f5593d_45%,#cf2d8e_70%,#7a3ad0_100%)]">
        <FaInstagram size={20} />
      </div>
      <Svg w={23} h={23} className="ml-[39px]">
        <defs>
          <linearGradient id="sun" x1="0" y1="0" x2="1" y2="1">
            <stop offset="0" stopColor="#fdb72a" />
            <stop offset="1" stopColor="#e8641b" />
          </linearGradient>
        </defs>
        <circle cx="10" cy="12" r="10" fill="url(#sun)" stroke="none" />
        <circle cx="19" cy="3" r="3" fill="#d83b01" stroke="none" />
      </Svg>
      <span className="ml-[7px] w-[55px] pt-px text-[13.300px]">33°C</span>
      <Svg w={12} h={8}>
        <path d="M.5 7L6 1.500 11.500 7" strokeWidth="1.300" />
      </Svg>
      <Svg w={13} h={16} className="ml-[13px]">
        <path d="M.6 4.500h7v7h-7zM8 7l3.500-2v6.500L8 9.500M2 1.500Q5 0 8 1.500M2 14.500Q5 16 8 14.500" strokeWidth="1.200" />
      </Svg>
      <Svg w={17} h={11} className="ml-2">
        <path d="M4 11a3.500 3.500 0 010-6.500C5.500-.5 11-.5 12 3.500c5 0 5.500 7 1 7.500z" fill="#ddd" stroke="none" />
      </Svg>
      <Svg w={15} h={9} className="ml-2">
        <path d="M.5.5h12v8H.5zM14 3v3" />
        <path d="M2 2h5.500v5H2z" fill="#fff" stroke="none" />
      </Svg>
      <Svg w={17} h={13} className="ml-2">
        <path d="M.5 4.500H3L6.500 1v11L3 8.500H.5zM9 4.500q1.500 2 0 4M11.500 2.500q3 4 0 8M14 .5q4 6 0 12" />
      </Svg>
      <Svg w={13} h={13} className="ml-[10px]">
        <path d="M1 12A11 11 0 0112 1M4 12.500A8.500 8.500 0 0112 4" stroke="#8b8583" />
        <path d="M7 12.500a5.500 5.500 0 015-5" />
        <circle cx="11" cy="11.500" r="1.500" fill="#fff" stroke="none" />
      </Svg>
      <span className="ml-[10px] w-[33px] pt-px">ENG</span>
      <div className="flex w-[56px] flex-col items-center text-[11.300px] leading-[18px]">
        <span>05:44 ص</span>
        <span className="text-[11px]">٢٠٢٣/٠٥/٠٣</span>
      </div>
      <div className="relative ml-4 h-6 w-[26px]">
        <Svg w={17} h={16}>
          <path d="M0 0h16v12H8l-3 3.500V12H0z" fill="#fff" stroke="none" />
          <path d="M3 3.500h10M3 6h10M3 8.500h7" stroke="#423a37" />
        </Svg>
        <div className="absolute top-[7px] left-[7px] flex h-4 w-4 items-center justify-center rounded-full border border-[#8a8482] bg-[#3a3331]/90 text-[12px]">
          ٣
        </div>
      </div>
      <div className="ml-auto mr-[4px] h-10 w-px bg-[#7a7472]" />
    </div>
  );
}

export default function App() {
  return (
    <div className="relative flex h-[768px] w-[1366px] flex-col overflow-hidden bg-[#f3f2f1] font-['Open_Sans','DejaVu_Sans',sans-serif]">
      <TabStrip />
      <AddressBar />
      <WordHeader />
      <RibbonTabs />
      <Ribbon />
      <DocumentArea />
      <StatusBar />
      <Taskbar />
      <div className="absolute top-[650px] left-[1073px] whitespace-nowrap text-[#000]/25">
        <div className="text-[19.100px] leading-6">Activate Windows</div>
        <div className="text-[14.100px] leading-[22px] tracking-[0.150px]">Go to Settings to activate Windows.</div>
      </div>
      <div className="absolute top-[672px] left-[601px] flex w-[166px] flex-col items-center whitespace-nowrap text-[#a0a0a0]/40">
        <div className="scale-y-110 font-['DejaVu_Sans'] text-[46px] leading-[52px] font-bold">مستقل</div>
        <div className="font-['Liberation_Sans'] text-[26px] leading-[28px] font-bold">mostaql.com</div>
      </div>
    </div>
  );
}
